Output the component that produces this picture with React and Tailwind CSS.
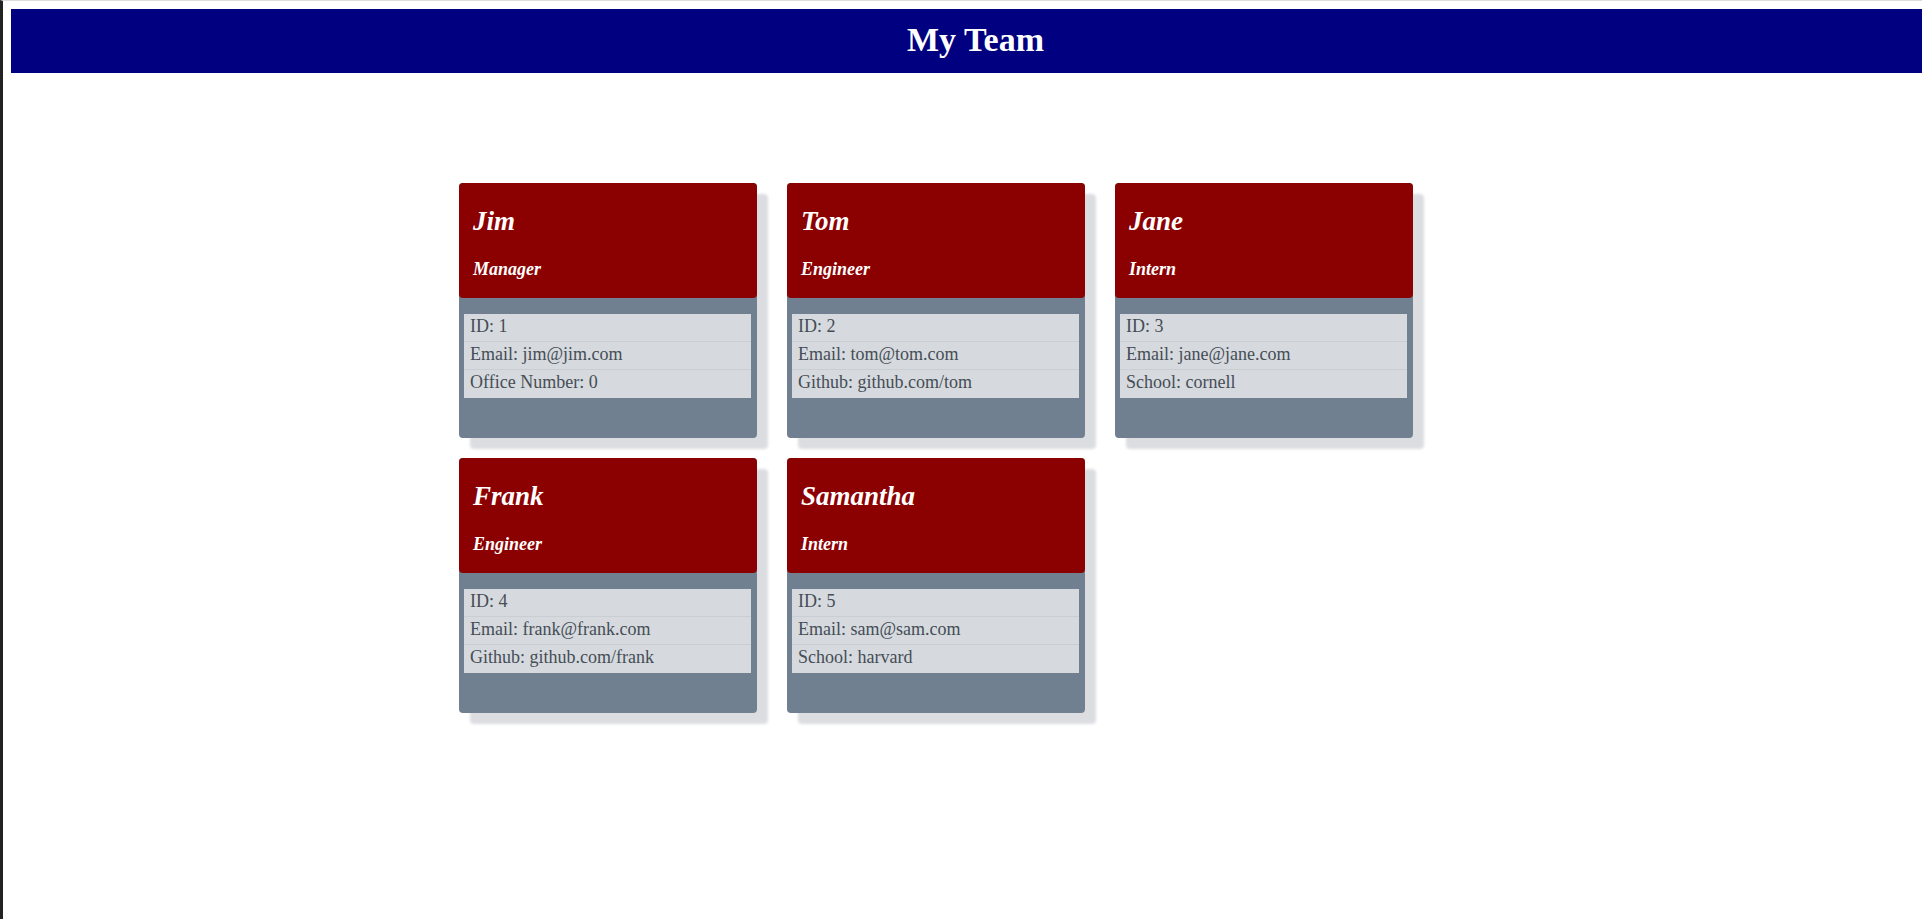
import React from 'react';

const team = [
  { name: 'Jim', role: 'Manager', id: 1, email: 'jim@jim.com', extra: 'Office Number: 0' },
  { name: 'Tom', role: 'Engineer', id: 2, email: 'tom@tom.com', extra: 'Github: github.com/tom' },
  { name: 'Jane', role: 'Intern', id: 3, email: 'jane@jane.com', extra: 'School: cornell' },
  { name: 'Frank', role: 'Engineer', id: 4, email: 'frank@frank.com', extra: 'Github: github.com/frank' },
  { name: 'Samantha', role: 'Intern', id: 5, email: 'sam@sam.com', extra: 'School: harvard' },
];

const EmployeeCard = ({ member }) => {
  const rows = [`ID: ${member.id}`, `Email: ${member.email}`, member.extra];

  return (
    <div className="h-[255px] flex flex-col bg-[#708090] rounded-[4px] shadow-[11px_11px_3px_#dcdde1]">
      {/* card header */}
      <div className="h-[115px] shrink-0 bg-[#8b0000] rounded-[4px] px-[14px] pt-[21px] text-white italic font-bold">
        <h2 className="text-[27px] leading-[34px]">{member.name}</h2>
        <h3 className="mt-[20px] text-[18px] leading-[22px]">{member.role}</h3>
      </div>

      {/* details */}
      <ul className="mt-[16px] ml-[5px] mr-[6px] bg-[#d6dadf] text-[#454d55] text-[18px]">
        {rows.map((row, i) => (
          <li
            key={i}
            className={`px-[6px] leading-[24px] pb-[3px] ${i < rows.length - 1 ? 'border-b border-[#c9ced3]' : 'pb-[4px]'}`}
          >
            {row}
          </li>
        ))}
      </ul>
    </div>
  );
};

export default function App() {
  return (
    <div className="min-h-screen bg-white border-t border-t-[#dcdcdc] border-l-[3px] border-l-[#222222] font-['Liberation_Serif',serif]">
      <header className="ml-[8px] mt-[8px] h-[64px] bg-[#000080] text-center pt-[11px] pl-[18px]">
        <h1 className="text-white font-bold text-[34px] leading-[40px]">My Team</h1>
      </header>

      <main className="ml-[456px] mt-[110px] grid grid-cols-[298px_298px_298px] gap-x-[30px] gap-y-[20px] pb-[100px]">
        {team.map((m) => (
          <EmployeeCard key={m.id} member={m} />
        ))}
      </main>
    </div>
  );
}
